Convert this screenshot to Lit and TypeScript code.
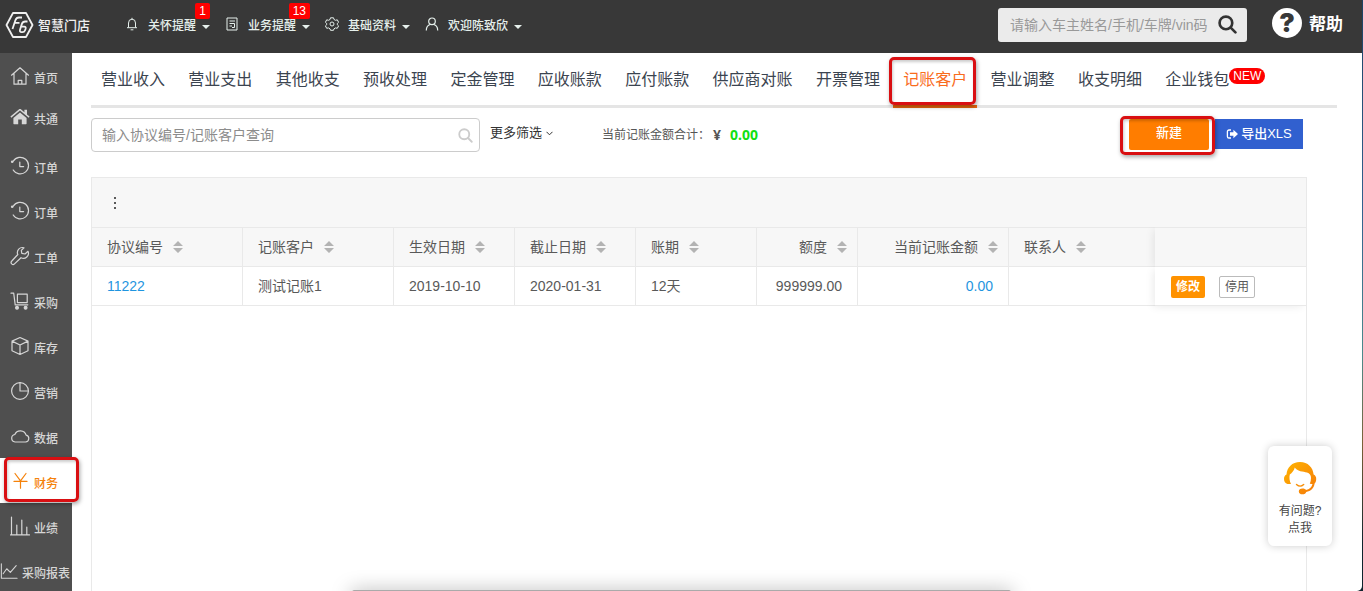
import { LitElement, html, css, svg, nothing } from "lit";
import { customElement } from "lit/decorators.js";
import { classMap } from "lit/directives/class-map.js";

const stroke = (body: unknown) => html`<svg class="icon" viewBox="0 0 20 20" fill="none" stroke="currentColor"
  stroke-width="1.2" stroke-linecap="round" stroke-linejoin="round" aria-hidden="true">${body}</svg>`;

const icons = {
  home: stroke(svg`<path d="M1.5 9.2 10 1.8l8.5 7.4M4 7.6v10.6h12V7.6M8.2 18v-3.6h3.6V18"/>`),
  house: html`<svg class="icon" viewBox="0 0 20 20" fill="currentColor" aria-hidden="true"><path d="M10 5.6 3.4 11v5.6c0 .4.2.6.6.6h4.2v-4.6h3.6v4.6H16c.4 0 .6-.2.6-.6V11zM19.6 9.6 17 7.4V2.8h-2.6v2.4L11.200 2.500c-.7-.6-1.700-.6-2.400 0L.4 9.600l.9 1.100L10 3.600l8.700 7.100z"/></svg>`,
  history: stroke(svg`<path d="M3.200 5.200A8.300 8.300 0 1 1 3.200 14M9.800 6v4.600h3.800"/><circle cx="2.200" cy="5.800" r="1.300" fill="currentColor" stroke="none"/>`),
  wrench: stroke(svg`<path d="M18 5.300 15 8l-3.200-.6-.5-3L14 1.800a5 5 0 0 0-6.200 6.700L1.800 15a1.900 1.900 0 0 0 2.700 2.900l6.500-6.200A5 5 0 0 0 18 5.300z"/>`),
  cart: stroke(svg`<path d="M1 2.200h2.700l1.500 11.600h12.600M7.400 3.200h9.800v8.400H7.400z"/><circle cx="7" cy="16.800" r="1.400" fill="currentColor"/><circle cx="15.600" cy="16.800" r="1.400" fill="currentColor"/>`),
  box: stroke(svg`<path d="m10 1.500 8 3.600v9.600L10 18.500l-8-3.800V5.100zM2 5.100l8 3.900 8-3.900M10 9v9.500"/>`),
  pie: stroke(svg`<circle cx="10" cy="10" r="8.400"/><path d="M10 1.600V10h8.400"/>`),
  cloud: stroke(svg`<path d="M5 16h10.500a3.500 3.500 0 0 0 .6-6.900A6 6 0 0 0 4.800 8.500 3.800 3.800 0 0 0 5 16z"/>`),
  yuan: stroke(svg`<path d="m5 2.500 5.500 7.300L16 2.500M4 10.400h13M10.500 9.800v7.400"/>`),
  bars: stroke(svg`<path d="M1.500 1v17.500M6.800 9v9.500M11.800 4v14.500M16.800 11v7.500M.5 18.800h19"/>`),
  trend: stroke(svg`<path d="M1.500 2v16H19M3.500 13l4-5.500 4 4L18 4"/>`),
};

const topIcons = {
  bell: html`<svg class="icon" viewBox="0 0 14 14" fill="none" stroke="currentColor" aria-hidden="true"><path d="M3.500 10.500V6a3.500 3.800 0 0 1 7 0v4.500M2 10.700h10M7 .8v1.400M5.600 12.800h2.800"/></svg>`,
  note: html`<svg class="icon" viewBox="0 0 14 14" fill="none" stroke="currentColor" aria-hidden="true"><path d="M2 1h10v12H2zM4.500 4h5.500M4.500 6.500h5M4.500 9h2.500M9.500 6.500v4H7"/></svg>`,
  gear: html`<svg class="icon" viewBox="0 0 14 14" fill="none" stroke="currentColor" stroke-linejoin="round" aria-hidden="true"><path d="M5.500.8h3l.5 1.700 1.500.8 1.800-.5 1.300 2.500L12.300 6.500v1.200l1.300 1.200-1.300 2.400-1.800-.4-1.500.9-.5 1.500h-3L5 11.800l-1.500-.9-1.800.4L.4 8.900l1.300-1.200V6.500L.4 5.300l1.300-2.500 1.800.5L5 2.500z"/><circle cx="7" cy="7" r="2"/></svg>`,
  user: html`<svg class="icon" viewBox="0 0 14 14" fill="none" stroke="currentColor" stroke-width="1.200" aria-hidden="true"><circle cx="7" cy="4.300" r="3.300"/><path d="M1.300 13.500c0-3.500 2-5.500 4-6M12.700 13.500c0-3.500-2-5.500-4-6"/></svg>`,
};

const magnifier = (width: number) => html`<svg class="icon" viewBox="0 0 18 18" fill="none" stroke="currentColor"
  stroke-width=${width} stroke-linecap="round" aria-hidden="true"><circle cx="7.500" cy="7.500" r="6"/><path d="m12 12 4.500 4.500"/></svg>`;

const base = css`
  * { box-sizing: border-box; }
  button, input { font: inherit; color: inherit; margin: 0; padding: 0; border: 0; background: none; outline: 0; }
  button { cursor: pointer; white-space: nowrap; }
  a { color: inherit; text-decoration: none; }
  ul { list-style: none; margin: 0; padding: 0; }
  .icon { display: block; flex: none; }
  .marked { position: relative; }
  .marked::after {
    content: ""; position: absolute; inset: 0; z-index: 2; pointer-events: none;
    border: 3px solid #d90f12; border-radius: 5px;
    box-shadow: 1px 2px 4px rgba(0, 0, 0, .35), inset 1px 2px 3px rgba(0, 0, 0, .2);
  }
`;

@customElement("top-bar")
export class TopBar extends LitElement {
  static styles = [base, css`
    :host { display: flex; align-items: center; height: 53px; padding: 0 19px 4px 5px; background: #383838; color: #e6f0ec; }
    .brand { display: flex; align-items: center; gap: 4px; width: 120px; color: #f0f0f0; }
    .brand .icon { width: 29px; height: 28px; }
    .brand-name { font-size: 13px; font-weight: 500; }
    .menus { display: flex; gap: 15px; flex: 1; }
    .menu { position: relative; display: flex; align-items: center; padding-top: 2px; font-size: 12px; font-weight: 500; line-height: 20px; }
    .menu .icon { width: 14px; height: 14px; margin: 0 9px 3px 0; }
    .menu .caret { margin: 3px 0 0 6px; border: 4px solid transparent; border-top-color: currentColor; border-bottom: 0; }
    .badge { position: absolute; right: 0; bottom: 17px; min-width: 15px; padding: 0 4px; border-radius: 2px; background: #f00; color: #fff; font-weight: 400; line-height: 16px; text-align: center; }
    .search { display: flex; align-items: center; width: 249px; height: 34px; padding: 0 10px 0 12px; border-radius: 3px; background: #ebebeb; }
    .search input { flex: 1; min-width: 0; font: 14px/20px "Liberation Sans", "Noto Sans CJK SC", sans-serif; color: #333; }
    .search input::placeholder { color: #999; opacity: 1; }
    .search button { color: #333; }
    .search .icon { width: 19px; height: 19px; }
    .help { display: flex; align-items: center; gap: 7px; margin-left: 25px; padding-bottom: 4px; color: #fff; font-size: 17px; font-weight: 700; }
    .help-mark { display: grid; place-items: center; width: 30px; height: 30px; border-radius: 50%; background: #fff; color: #383838; font: 900 26px/30px "Inter", sans-serif; }
  `];

  private menus = [
    { icon: topIcons.bell, label: "关怀提醒", count: 1 },
    { icon: topIcons.note, label: "业务提醒", count: 13 },
    { icon: topIcons.gear, label: "基础资料", count: 0 },
    { icon: topIcons.user, label: "欢迎陈致欣", count: 0 },
  ];

  render() {
    return html`
      <a class="brand" href="#">
        <svg class="icon" viewBox="0 0 29 28" fill="none" stroke="currentColor" stroke-width="1.800" stroke-linejoin="round" aria-hidden="true">
          <path d="M8 2h13l6.500 12L21 26H8L1.500 14z"/>
          <path d="M17 6.500h-3c-2 0-3 1-3.600 2.800L7.500 18M9.800 11.800h4.700M22.500 10.500h-2.200c-1.900 0-2.900.8-3.500 2.600L15 18.700c-.5 1.600.2 2.500 1.600 2.500h.8c1.400 0 2.200-.6 2.700-2l.5-1.500c.4-1.300 0-2-1.400-2h-2.700"/>
        </svg>
        <span class="brand-name">智慧门店</span>
      </a>
      <div class="menus">
        ${this.menus.map((m) => html`
          <button class="menu" type="button" aria-haspopup="menu">
            ${m.icon}${m.label}<span class="caret"></span>
            ${m.count ? html`<span class="badge">${m.count}</span>` : nothing}
          </button>`)}
      </div>
      <div class="search">
        <input type="text" aria-label="车主查询" placeholder="请输入车主姓名/手机/车牌/vin码">
        <button type="button" aria-label="查询">${magnifier(2.5)}</button>
      </div>
      <a class="help" href="#"><span class="help-mark">?</span>帮助</a>`;
  }
}

@customElement("side-nav")
export class SideNav extends LitElement {
  static styles = [base, css`
    :host { display: block; width: 72px; flex: none; background: #4f4f4f; color: #d6d6d6; }
    .item { display: flex; align-items: flex-end; gap: 4px; height: 45px; padding: 0 0 10px 10px; font-size: 12px; font-weight: 500; line-height: 18px; white-space: nowrap; }
    .item .icon { width: 20px; height: 20px; margin-bottom: 2px; }
    .raised { padding-bottom: 14px; }
    .wide { padding-left: 0; }
    .wide .icon { width: 18px; }
    .current { background: #fff; color: #f5820b; }
    .current::after { inset: -1px -7px 1px 4px; }
  `];

  private items = [
    { icon: icons.home, label: "首页" },
    { icon: icons.house, label: "共通", raised: true },
    { icon: icons.history, label: "订单" },
    { icon: icons.history, label: "订单" },
    { icon: icons.wrench, label: "工单" },
    { icon: icons.cart, label: "采购" },
    { icon: icons.box, label: "库存" },
    { icon: icons.pie, label: "营销" },
    { icon: icons.cloud, label: "数据" },
    { icon: icons.yuan, label: "财务", current: true },
    { icon: icons.bars, label: "业绩" },
    { icon: icons.trend, label: "采购报表", wide: true },
  ];

  render() {
    return html`<nav>${this.items.map((i) => html`
      <a href="#" class=${classMap({ item: true, raised: !!i.raised, wide: !!i.wide, current: !!i.current, marked: !!i.current })}>
        ${i.icon}<span>${i.label}</span>
      </a>`)}</nav>`;
  }
}

@customElement("section-tabs")
export class SectionTabs extends LitElement {
  static styles = [base, css`
    :host { display: block; }
    .tabs { font: 12px/54px "Liberation Sans", sans-serif; white-space: nowrap; box-shadow: inset 0 -3px #e5e5e5; }
    .tab { display: inline-block; height: 55px; padding: 0 10px; border-bottom: 3px solid transparent; vertical-align: top; font: 16px/54px "Liberation Sans", "Noto Sans CJK SC", sans-serif; color: #3b4450; }
    .current { border-color: #e8650c; color: #f96c1d; }
    .current::after { inset: 4px 1px 0 -4px; }
    .anchor { position: relative; }
    .new { position: absolute; left: 100%; top: -3px; padding: 0 4px; border-radius: 8px; background: #f00; color: #fff; font-size: 12px; line-height: 16px; }
  `];

  private tabs = ["营业收入", "营业支出", "其他收支", "预收处理", "定金管理", "应收账款", "应付账款", "供应商对账", "开票管理", "记账客户", "营业调整", "收支明细", "企业钱包"];

  render() {
    return html`<nav><ul class="tabs">${this.tabs.map((t) => {
      const current = t === "记账客户";
      return html`<li class=${classMap({ tab: true, current, marked: current })}><a class="anchor" href="#">${t}${t === "企业钱包" ? html`<span class="new">NEW</span>` : nothing}</a></li> `;
    })}</ul></nav>`;
  }
}

@customElement("filter-bar")
export class FilterBar extends LitElement {
  static styles = [base, css`
    :host { display: flex; align-items: center; height: 34px; color: #333; }
    .search { display: flex; align-items: center; width: 389px; height: 34px; padding: 0 6px 0 10px; border: 1px solid #ccc; border-radius: 4px; }
    .search input { flex: 1; min-width: 0; font-size: 14px; line-height: 20px; }
    .search input::placeholder { color: #8c8c8c; opacity: 1; }
    .search button { color: #ccc; }
    .search .icon { width: 15px; height: 15px; }
    .more { display: flex; align-items: center; gap: 4px; margin-left: 10px; padding-bottom: 4px; font-size: 13px; line-height: 20px; }
    .more .icon { width: 7px; height: 5px; }
    .total { display: flex; align-items: center; margin-left: 49px; font-size: 12px; line-height: 20px; color: #555; }
    .currency { margin-left: 3px; font: 700 14px/20px "Noto Sans", sans-serif; }
    .amount { margin-left: 9px; font: 700 14px/20px "Noto Sans", sans-serif; color: #12e012; }
    .actions { display: flex; gap: 6px; margin-left: auto; padding-bottom: 2px; color: #fff; font-size: 13px; font-weight: 500; line-height: 20px; }
    .create { width: 80px; height: 31px; padding-bottom: 2px; border-radius: 2px; background: #ff7d00; }
    .create.marked::after { inset: -3px -6px -5px -9px; }
    .export { display: flex; align-items: center; justify-content: center; gap: 3px; width: 88px; height: 30px; background: #3160cf; }
    .export .icon { width: 12px; height: 12px; }
  `];

  render() {
    return html`
      <div class="search">
        <input type="text" aria-label="协议查询" placeholder="输入协议编号/记账客户查询">
        <button type="button" aria-label="查询">${magnifier(2.2)}</button>
      </div>
      <button class="more" type="button">更多筛选
        <svg class="icon" viewBox="0 0 7 5" fill="none" stroke="currentColor" aria-hidden="true"><path d="m.5.8 3 3 3-3"/></svg>
      </button>
      <div class="total"><span>当前记账金额合计：</span><span class="currency">¥</span><span class="amount">0.00</span></div>
      <div class="actions">
        <button class="create marked" type="button">新建</button>
        <button class="export" type="button">
          <svg class="icon" viewBox="0 0 12 12" aria-hidden="true"><path d="M5 2H3a1.600 1.600 0 0 0-1.600 1.600v4.800A1.600 1.600 0 0 0 3 10h2" fill="none" stroke="currentColor" stroke-width="1.300"/><path d="M7.400 1.800 12 6l-4.600 4.200V7.700H4V4.300h3.400z" fill="currentColor"/></svg>导出XLS
        </button>
      </div>`;
  }
}

@customElement("account-table")
export class AccountTable extends LitElement {
  static styles = [base, css`
    :host { display: block; border: 1px solid #e9e9e9; border-bottom: 0; color: #595959; }
    .tools { display: flex; align-items: center; height: 49px; padding-left: 16px; background: #f7f7f7; }
    .tools button { display: grid; place-items: center; width: 14px; height: 20px; }
    .tools .icon { width: 2px; height: 12px; }
    table { width: 100%; border-collapse: separate; border-spacing: 0; table-layout: fixed; font-size: 14px; line-height: 20px; }
    th, td { height: 39px; padding: 0 15px; border-right: 1px solid #e9e9e9; border-bottom: 1px solid #e9e9e9; font-weight: 400; text-align: left; white-space: nowrap; }
    th { height: 40px; border-top: 1px solid #e9e9e9; background: #f7f7f7; }
    .code, .customer, .balance { width: 151px; }
    .date, .term { width: 121px; }
    .limit { width: 101px; }
    .number { text-align: right; }
    th.number { padding-right: 10px; }
    .before-fixed { border-right: 0; }
    .fixed { width: 151px; border-right: 0; box-shadow: -3px 2px 8px -1px rgba(0, 0, 0, .08); clip-path: inset(0 0 -8px -12px); }
    th.fixed { clip-path: inset(0 0 0 -12px); }
    .sort { display: inline-flex; align-items: center; gap: 10px; }
    .sort .icon { width: 10px; height: 12px; color: #b3b3b3; }
    .link { color: #1f95e0; }
    .ops { display: flex; gap: 14px; padding: 2px 0 0 1px; font-size: 12px; line-height: 18px; }
    .edit { width: 34px; height: 22px; border-radius: 2px; background: #ff9200; color: #fff; font-weight: 700; }
    .stop { width: 36px; height: 22px; border: 1px solid #bbb; border-radius: 2px; background: #fff; }
  `];

  private columns = [
    { label: "协议编号", cls: "code" },
    { label: "记账客户", cls: "customer" },
    { label: "生效日期", cls: "date" },
    { label: "截止日期", cls: "date" },
    { label: "账期", cls: "term" },
    { label: "额度", cls: "limit number" },
    { label: "当前记账金额", cls: "balance number" },
    { label: "联系人", cls: "before-fixed" },
  ];

  render() {
    return html`
      <div class="tools"><button type="button" aria-label="列设置">
        <svg class="icon" viewBox="0 0 2 12" fill="currentColor" aria-hidden="true"><path d="M0 0h2v2H0zM0 5h2v2H0zM0 10h2v2H0z"/></svg>
      </button></div>
      <table>
        <thead><tr>
          ${this.columns.map((c) => html`<th class=${c.cls}><button class="sort" type="button">${c.label}
            <svg class="icon" viewBox="0 0 10 12" fill="currentColor" aria-hidden="true"><path d="m5 0 5 5H0zM0 7h10l-5 5z"/></svg>
          </button></th>`)}
          <th class="fixed"></th>
        </tr></thead>
        <tbody><tr>
          <td><a class="link" href="#">11222</a></td>
          <td>测试记账1</td>
          <td>2019-10-10</td>
          <td>2020-01-31</td>
          <td>12天</td>
          <td class="number">999999.00</td>
          <td class="number"><a class="link" href="#">0.00</a></td>
          <td class="before-fixed"></td>
          <td class="fixed"><div class="ops">
            <button class="edit" type="button">修改</button>
            <button class="stop" type="button">停用</button>
          </div></td>
        </tr></tbody>
      </table>`;
  }
}

@customElement("app-root")
export class AppRoot extends LitElement {
  static styles = [base, css`
    :host { display: block; height: 100vh; padding-right: 1px; overflow: hidden; position: relative;
      background: linear-gradient(#1d4263 0, #33618f 35%, #4c8a8c 60%, #7d6238 75%, #10242e 92%);
      font-family: "Liberation Sans", "Noto Sans CJK SC", sans-serif; }
    .shell { display: flex; flex-direction: column; height: 100%; background: #fff; border-bottom-right-radius: 5px; overflow: hidden; }
    .body { display: flex; flex: 1; min-height: 0; }
    .main { display: flex; flex-direction: column; flex: 1; min-width: 0; padding: 0 25px 0 19px; }
    side-nav { position: relative; z-index: 1; }
    filter-bar { margin: 10px 34px 25px 0; }
    account-table { flex: 1; margin-right: 30px; }
    .support { position: absolute; right: 31px; bottom: 45px; z-index: 3; display: flex; flex-direction: column; align-items: center; width: 64px; height: 100px; padding-top: 15px; border-radius: 6px; background: #fff; box-shadow: 0 0 8px rgba(0, 0, 0, .2); color: #444; font-size: 12px; line-height: 17px; text-align: center; }
    .support .icon { width: 34px; height: 34px; margin-bottom: 8px; }
    .glow { position: absolute; left: 352px; right: 352px; bottom: -4px; height: 5px; border-radius: 4px; background: #aaa; box-shadow: 0 4px 20px 2px rgba(0, 0, 0, .4); }
  `];

  render() {
    return html`
      <div class="shell">
        <top-bar></top-bar>
        <div class="body">
          <side-nav></side-nav>
          <main class="main">
            <section-tabs></section-tabs>
            <filter-bar></filter-bar>
            <account-table></account-table>
          </main>
        </div>
      </div>
      <a class="support" href="#">
        <svg class="icon" viewBox="0 0 34 34" aria-hidden="true">
          <defs><linearGradient id="hair" x1="0" y1="0" x2="1" y2="1"><stop offset="0" stop-color="#ffb400"/><stop offset="1" stop-color="#f57a0a"/></linearGradient></defs>
          <path fill="url(#hair)" d="M17 1C9 1 4 6.500 3.500 13.500 1.500 14.500 1 16 1 18c0 2.500 1.200 4.500 3.500 5H8c-1.500-3-2-6.500-1.200-9.500C9 12 11 9.500 11.800 6.500c2.200 4 8.500 4 12.200 5 2.600.8 4 2.500 4 5.500 0 2-.4 4-1.200 5.800l2 .2h.7c-.7 3.200-3.200 5.500-6.500 6-.6-1-1.700-1.500-3.500-1.500-2.300 0-3.700 1.200-3.700 2.900s1.400 2.900 3.700 2.900c2 0 3.300-.9 3.700-2.400 4.600-.7 7.800-3.700 8.400-8.400 1-.9 1.600-2.500 1.600-4.500s-.6-3.500-2.600-4.500C30 6.500 25 1 17 1z"/>
          <path d="M13.500 23.500c2.200 2 5 2 7.200 0" fill="none" stroke="#f7900b" stroke-width="1.400" stroke-linecap="round"/>
        </svg>
        <span>有问题?</span><span>点我</span>
      </a>
      <div class="glow"></div>`;
  }
}
